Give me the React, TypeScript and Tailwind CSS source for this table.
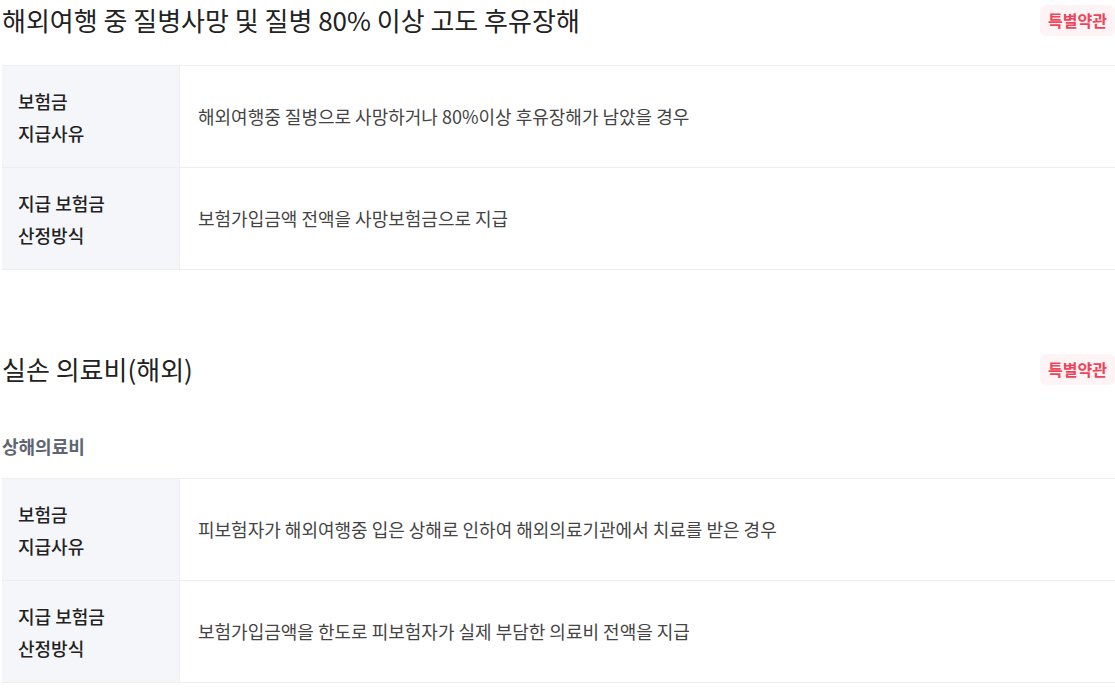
import React from "react";

interface Row {
  label: string[];
  text: string;
}

interface Section {
  title: string;
  sub?: string;
  rows: Row[];
}

const sections: Section[] = [
  {
    title: "해외여행 중 질병사망 및 질병 80% 이상 고도 후유장해",
    rows: [
      { label: ["보험금", "지급사유"], text: "해외여행중 질병으로 사망하거나 80%이상 후유장해가 남았을 경우" },
      { label: ["지급 보험금", "산정방식"], text: "보험가입금액 전액을 사망보험금으로 지급" },
    ],
  },
  {
    title: "실손 의료비(해외)",
    sub: "상해의료비",
    rows: [
      { label: ["보험금", "지급사유"], text: "피보험자가 해외여행중 입은 상해로 인하여 해외의료기관에서 치료를 받은 경우" },
      { label: ["지급 보험금", "산정방식"], text: "보험가입금액을 한도로 피보험자가 실제 부담한 의료비 전액을 지급" },
    ],
  },
];

export default function App() {
  return (
    <div
      className="w-[1115px] h-[688px] overflow-hidden bg-white pl-[2px] text-[#222]"
      style={{ fontFamily: '"Noto Sans CJK KR", "Noto Sans", sans-serif' }}
    >
      {sections.map((s, i) => (
        <section key={i} className={i === 0 ? "pt-[4px]" : "pt-[83px]"}>
          {/* 제목 + 배지 */}
          <div className="flex items-center justify-between h-[32px]">
            <h2 className="text-[26px] font-normal text-[#222] leading-none">
              {s.title}
            </h2>
            <span className="rounded-md bg-[#fff4f5] px-[8px] h-[31px] flex items-center text-[16px] font-bold text-[#f0435a]">
              특별약관
            </span>
          </div>

          {s.sub && (
            <div className="mt-[52px] text-[18px] font-bold text-[#5f6673] leading-none">
              {s.sub}
            </div>
          )}

          {/* 표 */}
          <div className={`${s.sub ? "mt-[23px]" : "mt-[29px]"} border-t border-[#eceef2]`}>
            {s.rows.map((r, j) => (
              <div key={j} className="flex h-[102px] border-b border-[#eceef2]">
                <div className="w-[178px] shrink-0 bg-[#f5f6fa] border-r border-[#eceef2] flex flex-col justify-center pl-[16px] text-[18px] font-medium leading-[32px] text-[#222]">
                  {r.label.map((l) => (
                    <span key={l}>{l}</span>
                  ))}
                </div>
                <div className="flex items-center pl-[18px] text-[18px] text-[#444]">
                  {r.text}
                </div>
              </div>
            ))}
          </div>
        </section>
      ))}
    </div>
  );
}
